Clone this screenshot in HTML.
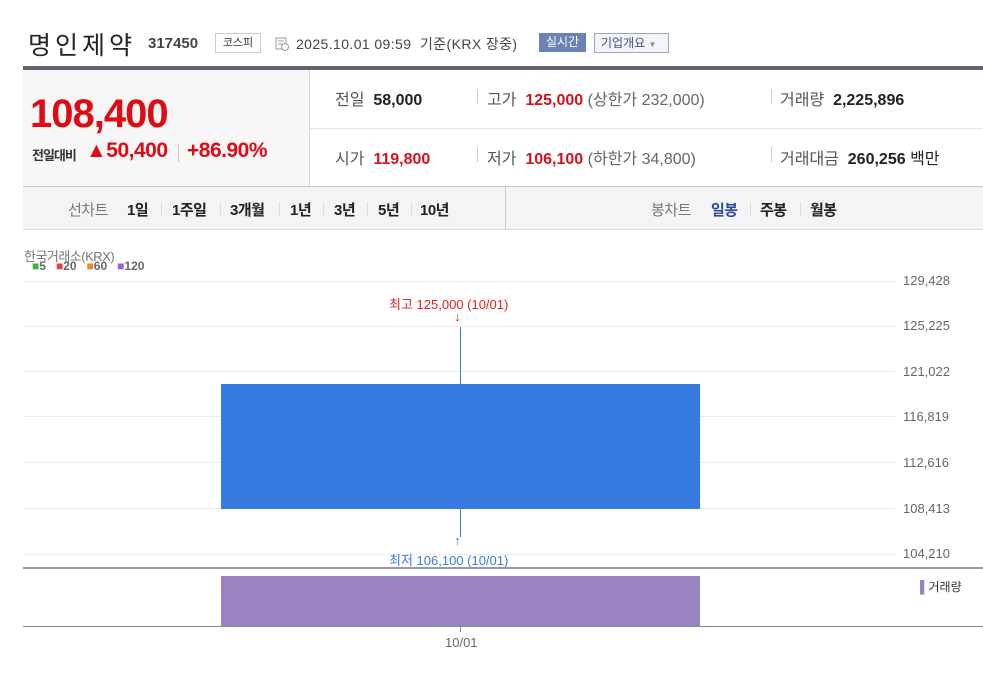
<!DOCTYPE html>
<html><head><meta charset="utf-8"><style>
body{margin:0;width:983px;height:693px;background:#fff;position:relative;overflow:hidden;font-family:"Liberation Sans","Noto Sans CJK KR",sans-serif;}
.a{position:absolute;white-space:nowrap;}
.r{color:#e00a14}
.dr{color:#d4121c}
.g{color:#555}
.sep{position:absolute;width:1px;background:#ccc}
.gl{position:absolute;left:23px;width:872px;height:1px;background:#ececec}
.yl{position:absolute;left:903px;font-size:13px;color:#666}
.t{position:absolute;top:199px;font-size:15px;font-weight:bold;color:#222;letter-spacing:-0.5px;white-space:nowrap}
.ts{position:absolute;top:202px;width:1px;height:14px;background:#ddd}
</style></head><body>
<div class="a" style="left:28px;top:26px;font-size:25px;color:#222;letter-spacing:4px">명인제약</div>
<div class="a" style="left:148px;top:35px;font-size:15px;font-weight:bold;color:#444">317450</div>
<div class="a" style="left:215px;top:33px;width:44px;height:18px;border:1px solid #ccc;font-size:11px;color:#333;text-align:center;line-height:18px">코스피</div>
<svg class="a" style="left:275px;top:37px" width="14" height="14"><rect x="1" y="1" width="10" height="11" fill="none" stroke="#999"/><line x1="3" y1="4" x2="9" y2="4" stroke="#999"/><line x1="3" y1="7" x2="9" y2="7" stroke="#999"/><circle cx="10" cy="10" r="3.5" fill="#fff" stroke="#999"/></svg>
<div class="a" style="left:296px;top:34px;font-size:14px;color:#444;letter-spacing:0.4px">2025.10.01 09:59 &nbsp;기준(KRX 장중)</div>
<div class="a" style="left:539px;top:33px;width:47px;height:19px;background:#6a82b5;color:#fff;font-size:12px;text-align:center;line-height:19px">실시간</div>
<div class="a" style="left:594px;top:33px;width:73px;height:18px;border:1px solid #9aa8c8;background:#f2f4f9;color:#3a4f86;font-size:12px;line-height:18px;text-indent:6px">기업개요 <span style="font-size:8px;color:#889">▼</span></div>

<div class="a" style="left:23px;top:66px;width:960px;height:4px;background:#5f646c"></div>
<div class="a" style="left:23px;top:70px;width:286px;height:116px;background:#f7f7f7;border-right:1px solid #ddd"></div>
<div class="a" style="left:310px;top:128px;width:673px;height:1px;background:#e4e4e4"></div>
<div class="a r" style="left:30px;top:92px;font-size:40px;font-weight:bold;letter-spacing:-1px">108,400</div>
<div class="a" style="left:32px;top:145px;font-size:13px;color:#333;letter-spacing:-1px;font-weight:bold">전일대비</div>
<div class="a r" style="left:86px;top:139px;font-size:21px;letter-spacing:-0.5px;font-weight:bold">▲50,400</div>
<div class="sep" style="left:178px;top:144px;height:18px"></div>
<div class="a r" style="left:187px;top:139px;font-size:21px;font-weight:bold;letter-spacing:-0.5px">+86.90%</div>

<div class="a" style="left:335px;top:86px;font-size:16px;color:#333"><span class="g">전일</span>&nbsp; <b style="color:#222">58,000</b></div>
<div class="sep" style="left:477px;top:89px;height:15px"></div>
<div class="a" style="left:487px;top:86px;font-size:16px"><span class="g">고가</span>&nbsp; <b class="dr">125,000</b> <span style="color:#666">(상한가 232,000)</span></div>
<div class="sep" style="left:771px;top:89px;height:15px"></div>
<div class="a" style="left:780px;top:86px;font-size:16px"><span class="g">거래량</span>&nbsp; <b style="color:#222">2,225,896</b></div>

<div class="a" style="left:335px;top:145px;font-size:16px"><span class="g">시가</span>&nbsp; <b class="dr">119,800</b></div>
<div class="sep" style="left:477px;top:147px;height:15px"></div>
<div class="a" style="left:487px;top:145px;font-size:16px"><span class="g">저가</span>&nbsp; <b class="dr">106,100</b> <span style="color:#666">(하한가 34,800)</span></div>
<div class="sep" style="left:771px;top:147px;height:15px"></div>
<div class="a" style="left:780px;top:145px;font-size:16px"><span class="g">거래대금</span>&nbsp; <b style="color:#222">260,256</b> <span style="color:#222">백만</span></div>

<div class="a" style="left:23px;top:186px;width:960px;height:42px;background:#f4f4f7;border-top:1px solid #c8c8c8;border-bottom:1px solid #ddd"></div>
<div class="a" style="left:505px;top:187px;width:1px;height:42px;background:#ccc"></div>
<div class="t" style="left:68px;color:#777;font-weight:normal">선차트</div>
<div class="t" style="left:127px">1일</div><div class="ts" style="left:161px"></div>
<div class="t" style="left:172px">1주일</div><div class="ts" style="left:220px"></div>
<div class="t" style="left:230px">3개월</div><div class="ts" style="left:279px"></div>
<div class="t" style="left:290px">1년</div><div class="ts" style="left:323px"></div>
<div class="t" style="left:334px">3년</div><div class="ts" style="left:367px"></div>
<div class="t" style="left:378px">5년</div><div class="ts" style="left:411px"></div>
<div class="t" style="left:420px">10년</div>
<div class="t" style="left:651px;color:#777;font-weight:normal">봉차트</div>
<div class="t" style="left:711px;color:#2c4b9a">일봉</div><div class="ts" style="left:750px"></div>
<div class="t" style="left:760px">주봉</div><div class="ts" style="left:800px"></div>
<div class="t" style="left:810px">월봉</div>

<div class="a" style="left:24px;top:246px;font-size:13px;color:#777;letter-spacing:-0.5px">한국거래소(KRX)</div>
<div class="a" style="left:32px;top:259px;font-size:12px;font-weight:bold;color:#666"><span style="color:#3cb43c">■</span>5 &nbsp;&nbsp;<span style="color:#e84040">■</span>20 &nbsp;&nbsp;<span style="color:#f08a20">■</span>60 &nbsp;&nbsp;<span style="color:#9b5fd0">■</span>120</div>

<div class="gl" style="top:281px"></div><div class="gl" style="top:326px"></div><div class="gl" style="top:371px"></div><div class="gl" style="top:416px"></div><div class="gl" style="top:462px"></div><div class="gl" style="top:508px"></div><div class="gl" style="top:554px"></div>
<div class="yl" style="top:273px">129,428</div><div class="yl" style="top:318px">125,225</div><div class="yl" style="top:364px">121,022</div><div class="yl" style="top:409px">116,819</div><div class="yl" style="top:455px">112,616</div><div class="yl" style="top:501px">108,413</div><div class="yl" style="top:546px">104,210</div>

<div class="a" style="left:460px;top:327px;width:1px;height:210px;background:#3a7ae0"></div>
<div class="a" style="left:221px;top:384px;width:479px;height:125px;background:#377be0"></div>
<div class="a" style="left:389px;top:294px;font-size:13px;color:#e02020">최고 125,000 (10/01)</div>
<div class="a" style="left:454px;top:309px;font-size:13px;color:#e02020;font-weight:bold">↓</div>
<div class="a" style="left:454px;top:533px;font-size:13px;color:#3a7ae0;font-weight:bold">↑</div>
<div class="a" style="left:389px;top:550px;font-size:13px;color:#3a7ae0">최저 106,100 (10/01)</div>

<div class="a" style="left:23px;top:567px;width:960px;height:2px;background:#999"></div>
<div class="a" style="left:221px;top:576px;width:479px;height:51px;background:#9882c2"></div>
<div class="a" style="left:23px;top:626px;width:960px;height:1px;background:#888"></div>
<div class="a" style="left:460px;top:627px;width:1px;height:5px;background:#888"></div>
<div class="a" style="left:920px;top:578px;font-size:12px;color:#333"><span style="color:#9882c2">▌</span>거래량</div>
<div class="a" style="left:445px;top:635px;font-size:13px;color:#666">10/01</div>
</body></html>
